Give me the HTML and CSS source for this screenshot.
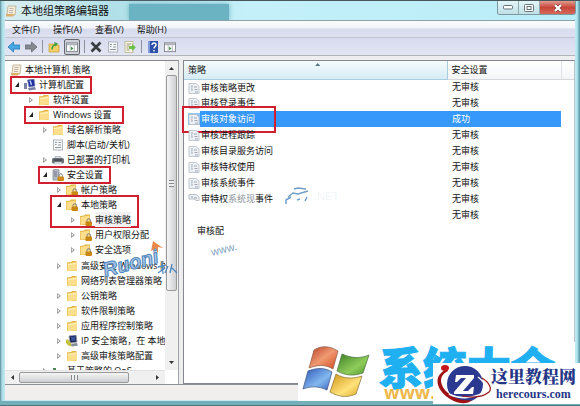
FILE: index.html
```
<!DOCTYPE html>
<html lang="zh-CN">
<head>
	<meta charset="UTF-8">
	<title>本地组策略编辑器</title>
	<link rel="stylesheet" href="styles.css">
</head>
<body>
	<!-- 共用图标 -->
	<svg class="defs" aria-hidden="true">
		<symbol id="folder" viewBox="0 0 12 12">
			<path d="M1 2.500 5 2l1-1h4.500v10H1z" fill="#e3b545"/>
			<path d="M1.500 3.500 11 2v8.500l-9.500.8z" fill="#fbdf8c"/>
			<path d="M2 4.200 10 3v1L2 5z" fill="#fff3c4"/>
		</symbol>
		<symbol id="lockfolder" viewBox="0 0 12 12">
			<path d="M0 2 4 1.500l1-1h5V11H0z" fill="#e3b545"/>
			<path d="M.6 3 9.500 1.500V10l-8.900.7z" fill="#fbdf8c"/>
			<path d="M7 8V6.500a1.700 1.700 0 0 1 3.500 0V8" fill="none" stroke="#777" stroke-width="1"/>
			<rect x="5.500" y="7.500" width="6.500" height="4.500" rx="1" fill="#c98712"/>
		</symbol>
		<symbol id="scroll" viewBox="0 0 12 12">
			<path d="M3 1h8L10 10H2z" fill="#f6edda" stroke="#b9a98d" stroke-width=".8"/>
			<path d="M4.500 3.500h4M4.200 5.500h4M4 7.500h4" stroke="#a99" stroke-width=".7"/>
			<path d="M1 9h8l-1 2.500H1z" fill="#dcae6c"/>
		</symbol>
		<symbol id="page" viewBox="0 0 12 12">
			<rect x="1.500" y="1" width="9" height="10" fill="#f7f8fa" stroke="#a9afb5" stroke-width=".9"/>
			<path d="M3 3.500h2M6.500 3.500h2.500M3 5.500h1.500M6 6h3M3 8.500h6" stroke="#8e979e" stroke-width="1"/>
		</symbol>
		<symbol id="policy" viewBox="0 0 12 12">
			<path d="M1 1.500h7l3 2.500v7.500H1z" fill="#eef2f6" stroke="#b4bbc3" stroke-width=".8"/>
			<path d="M3 4h2M3 6h1.500M6 5h3M3 8h2M6.500 7.500h3M7 10h3" stroke="#9ca6b2" stroke-width="1"/>
		</symbol>
		<symbol id="computer" viewBox="0 0 12 12">
			<path d="M3.500 1 10 0l1 7-6 1z" fill="#1c2f9c" stroke="#8089b5" stroke-width=".7"/>
			<path d="M6 1.500 7.500 6" stroke="#b9c9ff" stroke-width="1.500"/>
			<path d="M0 4h3v6H0zM4 9l7-1 1 2.500-7 1z" fill="#7882a8"/>
		</symbol>
		<symbol id="printer" viewBox="0 0 12 12">
			<path d="M3 2.500h6V5H3z" fill="#dce1e5" stroke="#889" stroke-width=".5"/>
			<rect y="4" width="12" height="5.500" rx="1.500" fill="#6b7178"/>
			<path d="M2.500 8h7v2.500h-7z" fill="#d5dadf"/><path d="M2 6h8" stroke="#333"/>
		</symbol>
		<symbol id="server" viewBox="0 0 12 12">
			<path d="M1 1 5 0l2 1v10H1z" fill="#b7bdc6" stroke="#777f88" stroke-width=".7"/>
			<path d="M2 3h3M2 5h3M2 7h3" stroke="#58616c" stroke-width=".8"/>
			<path d="M7 8V6.500a1.700 1.700 0 0 1 3.400 0V8" fill="none" stroke="#777"/>
			<rect x="5.500" y="7.500" width="6.500" height="4.500" rx="1" fill="#d08a17"/>
		</symbol>
		<symbol id="ipsec" viewBox="0 0 12 12">
			<path d="m3 1 7-1 1 7-7 1z" fill="#1a2650" stroke="#99a" stroke-width=".8"/>
			<path d="m5 2 4-.5.5 4-4 .5z" fill="#38539d"/>
			<path d="m4 9 7-1 1 2.500-6 1z" fill="#858d9b"/>
			<path d="M0 5c2-2 3 1 4 2s2 2 1 4C3 12 1 9 0 8z" fill="#c2c23e"/>
		</symbol>
		<symbol id="console" viewBox="0 0 13 12">
			<rect x=".5" y="1.500" width="12" height="9.500" fill="#fff" stroke="#7e858b"/>
			<path d="M1 2h11v2H1z" fill="#aab0b6"/>
			<path d="M4.500 4v7M9 4v7" stroke="#9da3a9" stroke-width=".8"/>
			<path d="M5.500 5.500 8 7.500 5.500 9.500z" fill="#368d38"/>
		</symbol>
	</svg>

	<div class="window">
		<header class="titlebar">
			<svg class="icon"><use href="#scroll"/></svg>
			<h1>本地组策略编辑器</h1>
			<div class="glass"></div>
			<div class="winbuttons">
				<button type="button" aria-label="最小化"><svg width="10" height="5" viewBox="0 0 10 5"><rect x=".5" y=".5" width="9" height="3.500" rx="1" fill="#fff" stroke="#66747a"/></svg></button>
				<button type="button" aria-label="最大化"><svg width="10" height="8" viewBox="0 0 10 8"><rect x=".5" y=".5" width="9" height="7" rx="1" fill="#fff" stroke="#66747a"/><rect x="3" y="2.500" width="4" height="3" fill="#fff" stroke="#66747a"/></svg></button>
				<button type="button" class="close" aria-label="关闭"><svg width="10" height="8" viewBox="0 0 10 8"><path d="m2 1 6 6M8 1 2 7" stroke="#7c3a38" stroke-width="3.500"/><path d="m2 1 6 6M8 1 2 7" stroke="#fff" stroke-width="2.200"/></svg></button>
			</div>
		</header>

		<nav class="menubar">
			<button type="button">文件(F)</button>
			<button type="button">操作(A)</button>
			<button type="button">查看(V)</button>
			<button type="button">帮助(H)</button>
		</nav>

		<div class="toolbar">
			<button type="button" aria-label="后退"><svg class="icon" viewBox="0 0 12 12"><path d="M0 6 5.500 1v3H12v4H5.500v3z" fill="#45a9e4" stroke="#2674b5" stroke-width=".8"/></svg></button>
			<button type="button" aria-label="前进"><svg class="icon" viewBox="0 0 12 12"><path d="M12 6 6.500 1v3H0v4h6.500v3z" fill="#85898f" stroke="#676b70" stroke-width=".8"/></svg></button>
			<i class="sep"></i>
			<button type="button" aria-label="向上一级"><svg class="icon" viewBox="0 0 12 12"><path d="M1 3h4l1 1h5v7H1z" fill="#f4cf68" stroke="#c59c35" stroke-width=".7"/><path d="M4 8.500C4 6 5 4 8 3.500" fill="none" stroke="#3d9b36" stroke-width="1.500"/><path d="m6 1 4 1.500-2.500 3z" fill="#3d9b36"/></svg></button>
			<button type="button" class="pressed" aria-label="显示控制台树"><svg class="icon"><use href="#console"/></svg></button>
			<i class="sep"></i>
			<button type="button" aria-label="删除"><svg class="icon" viewBox="0 0 12 12"><path d="m1.500 1.500 9 9M10.500 1.500l-9 9" stroke="#3b3d40" stroke-width="2.700"/></svg></button>
			<button type="button" aria-label="属性"><svg class="icon"><use href="#page"/></svg></button>
			<button type="button" aria-label="导出列表"><svg class="icon" viewBox="0 0 12 12"><path d="M1 .5h8v11H1z" fill="#fbf8e6" stroke="#b4af8a" stroke-width=".8"/><path d="M2.500 3h5M2.500 5h3M2.500 7h2M2.500 9h3" stroke="#98957c"/><path d="M5 5h3V3l4 3.500L8 10V8H5z" fill="#6cc04b"/></svg></button>
			<i class="sep"></i>
			<button type="button" aria-label="帮助"><svg class="icon" viewBox="0 0 12 12"><rect x="1" width="10" height="12" fill="#2c4fa8"/><path d="M1 0h2v12H1z" fill="#7f9ad8"/><path d="M5 4c0-3 4.500-2.500 4 0-.3 1.500-2 1.500-2 3.500M7 9v1.500" fill="none" stroke="#fff" stroke-width="1.400"/></svg></button>
			<button type="button" aria-label="操作窗格"><svg class="icon"><use href="#console"/></svg></button>
		</div>

		<main class="panes">
			<section class="treepane">
				<ul class="tree">
					<li><div class="node"><svg class="icon"><use href="#scroll"/></svg>本地计算机 策略</div>
						<ul>
							<li><div class="node open"><svg class="icon"><use href="#computer"/></svg>计算机配置<b class="mark"></b></div>
								<ul>
									<li><div class="node shut"><svg class="icon"><use href="#folder"/></svg>软件设置</div></li>
									<li><div class="node open"><svg class="icon"><use href="#folder"/></svg>Windows 设置<b class="mark wide"></b></div>
										<ul>
											<li><div class="node shut"><svg class="icon"><use href="#folder"/></svg>域名解析策略</div></li>
											<li><div class="node"><svg class="icon"><use href="#page"/></svg>脚本(启动/关机)</div></li>
											<li><div class="node shut"><svg class="icon"><use href="#printer"/></svg>已部署的打印机</div></li>
											<li><div class="node open"><svg class="icon"><use href="#server"/></svg>安全设置<b class="mark"></b></div>
												<ul>
													<li><div class="node shut"><svg class="icon"><use href="#lockfolder"/></svg>帐户策略</div></li>
													<li><div class="node open"><svg class="icon"><use href="#lockfolder"/></svg>本地策略<b class="mark two"></b></div>
														<ul class="spaced">
															<li><div class="node shut"><svg class="icon"><use href="#lockfolder"/></svg><span class="current">审核策略</span></div></li>
															<li><div class="node shut"><svg class="icon"><use href="#lockfolder"/></svg>用户权限分配</div></li>
															<li><div class="node shut"><svg class="icon"><use href="#lockfolder"/></svg>安全选项</div></li>
														</ul>
													</li>
													<li><div class="node shut"><svg class="icon"><use href="#folder"/></svg>高级安全 Windows 防火墙</div></li>
													<li><div class="node"><svg class="icon"><use href="#folder"/></svg>网络列表管理器策略</div></li>
													<li><div class="node shut"><svg class="icon"><use href="#folder"/></svg>公钥策略</div></li>
													<li><div class="node shut"><svg class="icon"><use href="#folder"/></svg>软件限制策略</div></li>
													<li><div class="node shut"><svg class="icon"><use href="#folder"/></svg>应用程序控制策略</div></li>
													<li><div class="node shut"><svg class="icon"><use href="#ipsec"/></svg>IP 安全策略，在 本地计算机</div></li>
													<li><div class="node shut"><svg class="icon"><use href="#folder"/></svg>高级审核策略配置</div></li>
												</ul>
											</li>
											<li><div class="node shut"><svg class="icon" viewBox="0 0 12 12"><path d="M1 3h3v9H1zM5 5h3v7H5zM9 7h3v5H9z" fill="#4e8a55"/></svg>基于策略的 QoS</div></li>
										</ul>
									</li>
								</ul>
							</li>
						</ul>
					</li>
				</ul>
				<div class="vscroll"><i class="arrow up"></i><i class="thumb"></i><i class="arrow down"></i></div>
				<div class="hscroll"><i class="arrow left"></i><i class="thumb"></i><i class="arrow right"></i></div>
				<svg class="stamp" width="78" height="46" viewBox="0 0 78 46">
					<text x="5" y="42" transform="rotate(-15 5 42)">Ruoni</text>
					<path d="m51 16 2-10 10 7-5-1v7l-2-6z" fill="#e98a4c"/>
					<path d="m58 32 8-2M62 27l1 12M58 38l7-5M68 31l-3 7M71 32l6 6M72 29l-2 9" stroke="#4f86bd" stroke-width="1.300"/>
				</svg>
			</section>

			<section class="listpane">
				<table>
					<thead>
						<tr><th class="sorted">策略</th><th class="setting">安全设置</th><th class="rest"></th></tr>
					</thead>
					<tbody>
						<tr><td><svg class="icon"><use href="#policy"/></svg><span>审核策略更改</span></td><td>无审核</td><td></td></tr>
						<tr><td><svg class="icon"><use href="#policy"/></svg><span>审核登录事件</span></td><td>无审核</td><td></td></tr>
						<tr class="selected"><td><svg class="icon"><use href="#policy"/></svg><span>审核对象访问</span><b class="mark"></b></td><td>成功</td><td></td></tr>
						<tr><td><svg class="icon"><use href="#policy"/></svg><span>审核进程跟踪</span></td><td>无审核</td><td></td></tr>
						<tr><td><svg class="icon"><use href="#policy"/></svg><span>审核目录服务访问</span></td><td>无审核</td><td></td></tr>
						<tr><td><svg class="icon"><use href="#policy"/></svg><span>审核特权使用</span></td><td>无审核</td><td></td></tr>
						<tr><td><svg class="icon"><use href="#policy"/></svg><span>审核系统事件</span></td><td>无审核</td><td></td></tr>
						<tr><td><svg class="icon" viewBox="0 0 12 12"><path d="M1 1.500h7l3 2v4H8L6 6H1z" fill="#eef2f6" stroke="#aab2bb" stroke-width=".8"/><path d="M3 4h2M6 5h3" stroke="#8b97a5"/></svg><span>审特权<em>系统现</em>事件</span></td><td>无审核</td><td></td></tr>
						<tr><td></td><td>无审核</td><td></td></tr>
						<tr><td class="loose">审核配</td><td></td><td></td></tr>
					</tbody>
				</table>
				<svg class="trace" width="140" height="74" viewBox="0 0 140 74">
					<path d="m91 11 5-4 5 1 10-3M97 3l4-1 8 1M89 18v-4l5-3M100 14l3-1M110 11l-2 4" fill="none" stroke="#6f9fca" stroke-width="1.500"/>
					<text class="www" x="15" y="70" transform="rotate(-14 15 70)">www.</text>
					<text class="net" x="117" y="14">.NET</text>
				</svg>
			</section>
		</main>

		<footer class="statusbar"></footer>
	</div>

	<!-- 右下角站点标志 -->
	<div class="sitebrand">
		<svg width="68" height="52" viewBox="0 0 68 52">
			<defs>
				<linearGradient id="r" x1="0" y1="0" x2="1" y2="1"><stop offset="0" stop-color="#b43c22"/><stop offset=".5" stop-color="#f09a72"/><stop offset="1" stop-color="#d2491d"/></linearGradient>
				<linearGradient id="g" x1="0" y1="0" x2="1" y2="1"><stop offset="0" stop-color="#3c7f25"/><stop offset=".6" stop-color="#8fcc5a"/><stop offset="1" stop-color="#4b962e"/></linearGradient>
				<linearGradient id="b" x1="0" y1="0" x2="1" y2="1"><stop offset="0" stop-color="#2b55b8"/><stop offset=".6" stop-color="#82b8ef"/><stop offset="1" stop-color="#3a62bb"/></linearGradient>
				<linearGradient id="y" x1="0" y1="0" x2="1" y2="1"><stop offset="0" stop-color="#cf9418"/><stop offset=".6" stop-color="#ffe27a"/><stop offset="1" stop-color="#d9a520"/></linearGradient>
			</defs>
			<path d="M12 5c8-5 16-4 24 1l-5 18c-8-5-16-4-24-1z" fill="url(#r)" stroke="#8d5a4a" stroke-width=".7"/>
			<path d="M40 9c9 4 17 5 27 1l-6 18c-9 3-17 3-26-2z" fill="url(#g)" stroke="#4f6d44" stroke-width=".7"/>
			<path d="M6 26c8-3 16-4 24 1l-5 18c-9-4-16-4-24-1z" fill="url(#b)" stroke="#3d4d80" stroke-width=".7"/>
			<path d="M34 29c8 5 17 5 26 2l-6 18c-9 4-17 3-26-2z" fill="url(#y)" stroke="#8a7030" stroke-width=".7"/>
		</svg>
		<div class="brandtext"><strong>系统大全</strong><span>www.</span></div>
	</div>
	<div class="sourcebrand">
		<svg width="58" height="41" viewBox="0 0 58 41">
			<circle cx="32" cy="21" r="18" fill="#2b3990"/>
			<path d="M23 12h18v3L30 28h5l4-4h2l-1 7H21v-2l12-14h-5l-4 4h-2z" fill="#fff"/>
			<path d="M14 6C-1 13 3 27 17 36c10 6 18 5 22 1-7 1-13 0-20-4C8 26 3 14 15 8z" fill="#9e1216"/>
			<path d="M16 31c14 7 30 3 39-5-3-5-6-9-10-12" fill="none" stroke="#fff" stroke-width="1.500"/>
			<path d="M49 15c8 5 10 11 7 14-6 5-16 6-27 4" fill="none" stroke="#9e1216" stroke-width="1.200"/>
			<ellipse cx="12" cy="5" rx="4" ry="3" fill="#c2171c"/>
		</svg>
		<div class="sourcetext"><strong>这里教程网</strong><span>herecours.com</span></div>
	</div>
</body>
</html>
```

FILE: styles.css
```
*{
	box-sizing:border-box;
}
body{
	margin:0;
	height:100vh;
	overflow:hidden;
	position:relative;
	font:9px/15px "Open Sans","Noto Sans CJK SC",sans-serif;
	color:#111;
}
ul{
	list-style:none;
	margin:0;
	padding:0;
}
button{
	font:inherit;
	color:inherit;
	border:0;
	padding:0;
	background:none;
}
svg{
	display:block;
}
.defs{
	position:absolute;
	width:0;
	height:0;
}
.icon{
	width:12px;
	height:12px;
	flex:none;
}

/* 窗口外框 */
.window{
	height:100%;
	display:flex;
	flex-direction:column;
	padding:0 5px 5px;
	background:linear-gradient(90deg,#5d8c98 0,#a9dde7 2px,#c4e9f0 5px,#c4e9f0 calc(100% - 5px),#b3e7f2 calc(100% - 3px),#4f8f9d 100%);
	border-top:1px solid #47565b;
	border-bottom:1px solid #46777f;
	box-shadow:inset 0 -4px #74aeb8;
}
.titlebar{
	display:flex;
	align-items:center;
	height:19px;
	margin-right:-1px;
	background:linear-gradient(90deg,#d9eef1,#b2e0e8 110px,#c4f0f9 240px,#b9edf8);
}
.titlebar h1{
	margin:0 0 0 4px;
	font-size:11px;
	line-height:18px;
	font-weight:400;
}
.glass{
	width:100px;
	height:16px;
	margin:3px 0 0 20px;
	background:#6bb2c2;
	box-shadow:0 0 5px #6bb2c2;
}
.winbuttons{
	display:flex;
	align-self:flex-start;
	margin-left:auto;
	border:1px solid #7d989e;
	border-top:0;
	border-radius:0 0 3px 3px;
	overflow:hidden;
}
.winbuttons button{
	display:flex;
	align-items:center;
	justify-content:center;
	width:21px;
	height:13px;
	background:linear-gradient(#e3f5f8,#bfe0e6);
	border-right:1px solid #8fa9ae;
}
.winbuttons .close{
	width:35px;
	border:0;
	background:linear-gradient(#e19c90,#c8463a 50%,#d5695a);
}

/* 菜单和工具栏 */
.menubar{
	display:flex;
	gap:13px;
	height:18px;
	padding:0 7px;
	background:linear-gradient(#fafbfd,#f2f4fa 7px,#d7dcee 8px,#dde1f1);
	border-top:1px solid #8aa1a6;
	border-bottom:1px solid #c2c5cf;
}
.toolbar{
	display:flex;
	align-items:center;
	gap:5px;
	height:18px;
	padding:0 3px;
	background:linear-gradient(#d7dbee,#e2e5f2);
	border-bottom:1px solid #b1b4bc;
}
.toolbar .pressed{
	border:1px solid #63676d;
	border-radius:2px;
	background:#d0d3dc;
	padding:1px;
	margin:0 -1px;
}
.sep{
	width:1px;
	height:13px;
	background:#8e929d;
}

/* 左右窗格 */
.panes{
	flex:1;
	min-height:0;
	display:flex;
	gap:4px;
	padding-top:4px;
	background:#eeedf0;
}
.treepane{
	position:relative;
	display:grid;
	grid-template:minmax(0,1fr) 14px / minmax(0,1fr) 13px;
	width:174px;
	background:#fff;
	border-top:1px solid #85898f;
	border-right:1px solid #9da2a9;
}
.tree{
	overflow:hidden;
	padding:1px 0 0 5px;
	white-space:nowrap;
}
.tree ul{
	padding-left:14px;
}
.tree .spaced{
	padding-bottom:1px;
}
.node{
	position:relative;
	display:flex;
	align-items:center;
	gap:3px;
	width:max-content;
	height:15px;
}
.current{
	background:#f1f1f1;
}
.shut::before,
.open::before{
	content:"";
	position:absolute;
	left:-9px;
	top:5px;
	width:4px;
	height:6px;
	background:#999;
	clip-path:polygon(0 0,100% 50%,0 100%,0 80%,60% 50%,20% 20%,20% 80%,0 100%);
}
.open::before{
	background:#222;
	height:5px;
	clip-path:polygon(100% 0,100% 100%,0 100%);
}

/* 红色标注框 */
.mark{
	position:absolute;
	inset:-1px -8px -2px -14px;
	border:2px solid #cf1f30;
}
.mark.wide{
	right:-12px;
}
.mark.two{
	inset:-2px -22px -16px -16px;
}

/* 滚动条 */
.vscroll,
.hscroll{
	display:flex;
	align-items:center;
	background:#f0f0f0;
}
.vscroll{
	flex-direction:column;
	padding:6px 1px;
}
.hscroll{
	padding:0 6px;
	border-top:1px solid #e2e2e2;
}
.vscroll .thumb{
	width:11px;
	flex:0 1 216px;
	margin:5px 0 auto;
	border:1px solid #999;
	border-radius:2px;
	background:repeating-linear-gradient(#888 0 1px,#eee 1px 3px) center/5px 7px no-repeat,linear-gradient(90deg,#f5f5f5,#cdced1);
}
.hscroll .thumb{
	height:11px;
	flex:0 1 110px;
	margin:0 auto 0 5px;
	border:1px solid #999;
	border-radius:2px;
	background:repeating-linear-gradient(90deg,#888 0 1px,#eee 1px 3px) center/7px 5px no-repeat,linear-gradient(#f5f5f5,#cdced1);
}
.arrow{
	width:5px;
	height:3px;
	background:#333;
	clip-path:polygon(50% 0,100% 100%,0 100%);
}
.arrow.down{
	clip-path:polygon(0 0,100% 0,50% 100%);
}
.arrow.left,
.arrow.right{
	width:3px;
	height:5px;
	clip-path:polygon(0 50%,100% 0,100% 100%);
}
.arrow.right{
	clip-path:polygon(0 0,100% 50%,0 100%);
}

/* 策略列表 */
.listpane{
	position:relative;
	flex:1;
	min-width:0;
	background:#fff;
	border:1px solid #85898f;
	border-right-color:#b9c6c9;
}
table{
	width:100%;
	table-layout:fixed;
	border-collapse:collapse;
}
th,
td{
	padding:0;
	height:16px;
	line-height:14px;
	text-align:left;
	font-weight:400;
	white-space:nowrap;
}
th{
	height:18px;
	padding-left:4px;
	border-bottom:1px solid #d5d8dd;
	border-right:1px solid #dfe3e8;
	background:linear-gradient(#fff,#f4f5f7);
}
.sorted{
	position:relative;
	background:linear-gradient(#f5fbfd,#d6ecf6);
	border-color:#a9cfdf;
}
.sorted::after{
	content:"";
	position:absolute;
	left:50%;
	top:2px;
	width:5px;
	height:3px;
	background:#557485;
	clip-path:polygon(50% 0,100% 100%,0 100%);
}
.setting{
	width:114px;
}
.rest{
	width:13px;
	border-right:0;
}
td:first-child{
	position:relative;
	padding-left:4px;
}
td:nth-child(2){
	padding-left:5px;
}
td .icon{
	display:inline-block;
	vertical-align:middle;
}
td span{
	display:inline-block;
	vertical-align:middle;
	padding-left:1px;
}
td em{
	font-style:normal;
	color:#8a9299;
}
td.loose{
	padding-left:13px;
}
.selected{
	color:#fff;
}
.selected td:first-child{
	background:linear-gradient(#3598fa,#3598fa) 16px 0 no-repeat;
}
.selected td:nth-child(2){
	background:#3598fa;
}
.selected .icon{
	background:#8fc4f5;
}
.selected .mark{
	inset:-5px auto -6px -2px;
	width:94px;
}
.statusbar{
	height:16px;
	background:#f1eeee;
	border-top:1px solid #8d9296;
}

/* 水印 */
.stamp{
	position:absolute;
	left:95px;
	top:174px;
}
.stamp text{
	font:italic 700 20px "Liberation Sans",sans-serif;
	fill:#a9c6e3;
	stroke:#4f86bd;
	stroke-width:1;
}
.trace{
	position:absolute;
	left:13px;
	top:125px;
}
.trace text{
	font:11px "Liberation Sans",sans-serif;
	fill:#7f9fc0;
}
.trace .net{
	fill:#f0f6fb;
}
.sitebrand{
	position:absolute;
	right:5px;
	bottom:5px;
	display:flex;
	gap:9px;
	width:277px;
	padding-left:4px;
	background:#fff;
}
.sitebrand svg{
	margin:3px 0 4px;
}
.brandtext{
	display:flex;
	flex-direction:column;
	padding-top:4px;
	white-space:nowrap;
}
.brandtext strong{
	font:900 44px/40px "Noto Sans CJK SC",sans-serif;
	color:#1fb0f2;
	-webkit-text-stroke:1px #1fb0f2;
}
.brandtext span{
	font:700 18px/12px "Open Sans",sans-serif;
	color:#efb84c;
	padding-left:5px;
}
.sourcebrand{
	position:absolute;
	right:0;
	bottom:2px;
	display:flex;
	width:147px;
	height:41px;
	background:#fff;
}
.sourcetext{
	display:flex;
	flex-direction:column;
	align-items:center;
	color:#263686;
	white-space:nowrap;
}
.sourcetext strong{
	font:900 17px/26px "Noto Serif CJK SC","Noto Sans CJK SC",serif;
}
.sourcetext span{
	font:700 12px/10px "Liberation Serif",serif;
}
```
